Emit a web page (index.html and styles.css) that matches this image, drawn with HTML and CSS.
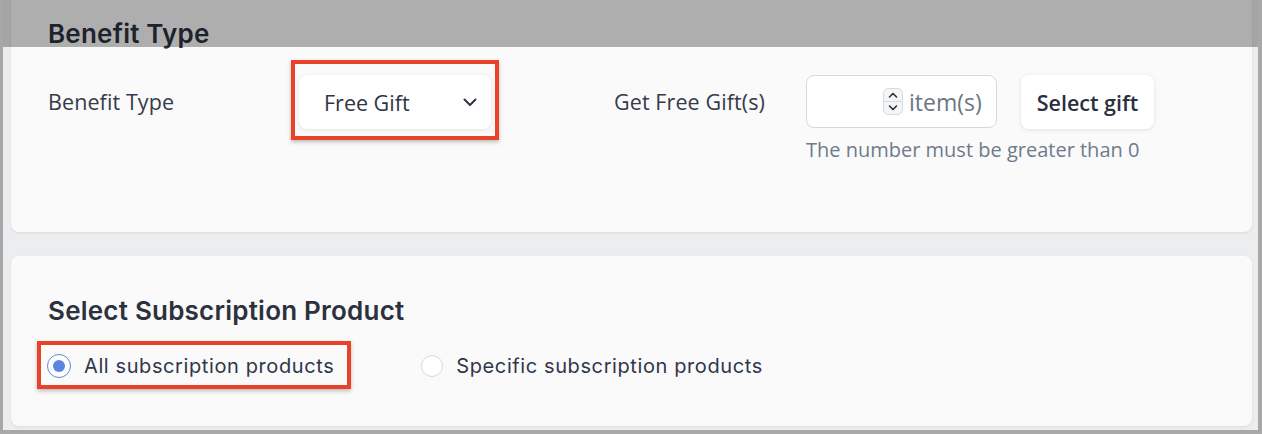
FILE: index.html
```html
<!DOCTYPE html>
<html lang="en">
<head>
<meta charset="utf-8">
<title>Benefit Type</title>
<link rel="stylesheet" href="styles.css">
</head>
<body>
<div class="frame">
  <section class="card card-benefit">
    <h2 class="card-title">Benefit Type</h2>
    <div class="benefit-row">
      <div class="field-label">Benefit Type</div>
      <div class="highlight highlight-select">
        <div class="select">
          <span class="select-value">Free Gift</span>
          <svg class="chevron" width="14" height="9" viewBox="0 0 14 9"><path d="M1.5 1.5 L7 7 L12.5 1.5" fill="none" stroke="#2f3545" stroke-width="2" stroke-linecap="round" stroke-linejoin="round"/></svg>
        </div>
      </div>
      <div class="field-label field-label-gift">Get Free Gift(s)</div>
      <div class="gift-input-group">
        <div class="gift-controls">
          <div class="number-input">
            <span class="spinner">
              <svg width="20" height="27" viewBox="0 0 20 27"><rect x="0.5" y="0.5" width="19" height="26" rx="5" fill="#f4f5f7" stroke="#d6d9de"/><line x1="1" y1="13.5" x2="19" y2="13.5" stroke="#d6d9de"/><path d="M6.5 9 L10 5.5 L13.5 9" fill="none" stroke="#2b2f38" stroke-width="1.6" stroke-linecap="round" stroke-linejoin="round"/><path d="M6.5 18 L10 21.5 L13.5 18" fill="none" stroke="#2b2f38" stroke-width="1.6" stroke-linecap="round" stroke-linejoin="round"/></svg>
            </span>
            <span class="unit">item(s)</span>
          </div>
          <button class="btn">Select gift</button>
        </div>
        <div class="helper">The number must be greater than 0</div>
      </div>
    </div>
  </section>

  <section class="card card-product">
    <h2 class="card-title">Select Subscription Product</h2>
    <div class="radio-row">
      <div class="highlight highlight-radio">
        <label class="radio">
          <span class="radio-dot checked"></span>
          <span class="radio-text">All subscription products</span>
        </label>
      </div>
      <label class="radio radio-second">
        <span class="radio-dot"></span>
        <span class="radio-text">Specific subscription products</span>
      </label>
    </div>
  </section>

  <div class="dim-overlay"></div>
</div>
</body>
</html>
```

FILE: styles.css
```css
* { box-sizing: border-box; }

html, body {
  margin: 0;
  padding: 0;
}

body {
  background: #a8a8a8;
  font-family: "Open Sans", "Liberation Sans", sans-serif;
  color: #333a4b;
  width: 1262px;
  height: 434px;
  overflow: hidden;
}

.frame {
  position: relative;
  margin: 0 4px 0 3px;
  height: 430px;
  overflow: hidden;
  background: #ecedef;
  padding: 0 6px 0 8px;
}

.card {
  background: #fafafa;
  border-radius: 8px;
  box-shadow: 0 1px 3px rgba(0, 0, 0, 0.08);
  padding: 0 37px;
}

.card-title {
  margin: 0;
  font-family: Inter, "Liberation Sans", sans-serif;
  font-weight: 600;
  font-size: 26px;
  line-height: 32px;
  letter-spacing: 0.22px;
  color: #2c313e;
}

.card-benefit {
  margin-top: -20px;
  padding-top: 38px;
  padding-bottom: 68px;
}

.benefit-row {
  display: flex;
  align-items: flex-start;
  margin-top: 10px;
}

.field-label {
  width: 243px;
  margin-top: 15px;
  height: 54px;
  line-height: 54px;
  font-size: 21.5px;
  letter-spacing: 0.1px;
  color: #353b4c;
  white-space: nowrap;
}

.field-label-gift {
  width: 192px;
  margin-left: 115px;
}

.highlight {
  border: 4px solid #e8432a;
  box-shadow: 0 2px 4px rgba(0, 0, 0, 0.25);
}

.highlight-select {
  padding: 11px 4px 7px;
}

.select {
  width: 192px;
  height: 54px;
  background: #fff;
  border-radius: 8px;
  box-shadow: 0 1px 4px rgba(0, 0, 0, 0.1);
  display: flex;
  align-items: center;
  justify-content: space-between;
  padding: 0 14px 0 25px;
}

.select-value {
  font-size: 21.5px;
  color: #2f3545;
}

.chevron {
  margin-top: 1px;
}

.gift-input-group {
  margin-top: 15px;
}

.gift-controls {
  display: flex;
  align-items: flex-start;
}

.number-input {
  width: 191px;
  height: 53px;
  background: #fff;
  border: 1px solid #d3d9e2;
  border-radius: 8px;
  display: flex;
  align-items: center;
  padding-left: 76px;
}

.spinner {
  display: flex;
  width: 20px;
  height: 27px;
}

.unit {
  margin-left: 6px;
  font-size: 23px;
  color: #6b7585;
  line-height: 30px;
}

.btn {
  margin-left: 24px;
  width: 133px;
  height: 54px;
  border: none;
  background: #fff;
  border-radius: 8px;
  box-shadow: 0 1px 4px rgba(0, 0, 0, 0.1);
  font-family: "Open Sans", "Liberation Sans", sans-serif;
  font-weight: 600;
  font-size: 21.5px;
  color: #2b3040;
  padding: 0;
}

.helper {
  margin-top: 7px;
  font-size: 20px;
  line-height: 28px;
  color: #6f7a8c;
  white-space: nowrap;
}

.card-product {
  margin-top: 24px;
  padding-top: 39px;
  padding-bottom: 37px;
}

.radio-row {
  display: flex;
  align-items: center;
  margin-top: 14px;
  margin-left: -11px;
}

.highlight-radio {
  height: 48px;
  padding: 2px 13px 0 6px;
  display: flex;
  align-items: center;
}

.radio {
  display: flex;
  align-items: center;
  font-family: Inter, "Liberation Sans", sans-serif;
  font-size: 20px;
  letter-spacing: 0.6px;
  color: #30364a;
}

.radio-dot {
  width: 24px;
  height: 24px;
  border-radius: 50%;
  background: #fff;
  border: 1px solid #d4d8df;
  display: flex;
  align-items: center;
  justify-content: center;
}

.radio-dot.checked {
  border: 1.5px solid #5a86e3;
}

.radio-dot.checked::after {
  content: "";
  width: 12px;
  height: 12px;
  border-radius: 50%;
  background: #5a86e3;
}

.radio-text {
  margin-left: 13px;
  white-space: nowrap;
}

.radio-second {
  margin-left: 70px;
  margin-top: 2px;
}

.radio-second .radio-dot {
  width: 22px;
  height: 22px;
}

.dim-overlay {
  position: absolute;
  top: 0;
  left: 0;
  right: 0;
  height: 47px;
  background: rgba(0, 0, 0, 0.3);
}
```
